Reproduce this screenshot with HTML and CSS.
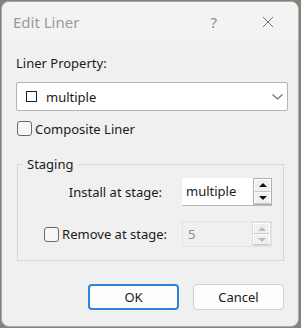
FILE: index.html
```html
<!DOCTYPE html>
<html lang="en">
<head>
    <meta charset="UTF-8">
    <title>Edit Liner</title>
    <link rel="stylesheet" href="styles.css">
</head>
<body>

    <div class="window">
        <div class="titlebar">
            <span class="title">Edit Liner</span>
            <span class="help">?</span>
            <svg class="close" width="12" height="12" viewBox="0 0 12 12">
                <path d="M1 1 L11 11 M11 1 L1 11" stroke="#7a7a7a" stroke-width="1" fill="none"/>
            </svg>
        </div>

        <div class="client">
            <div class="label">Liner Property:</div>

            <div class="combo">
                <span class="swatch"></span>
                <span class="combo-text">multiple</span>
                <svg class="chevron" width="11" height="6" viewBox="0 0 11 6">
                    <path d="M0.5 0.5 L5.5 5 L10.5 0.5" stroke="#6d6d6d" stroke-width="1.1" fill="none"/>
                </svg>
            </div>

            <label class="check-row">
                <span class="checkbox"></span>
                <span>Composite Liner</span>
            </label>

            <fieldset class="group">
                <legend>Staging</legend>
                <div class="stage-grid">
                    <div class="stage-label">Install at stage:</div>
                    <div class="spin">
                        <span class="spin-value">multiple</span>
                        <span class="spin-buttons">
                            <span class="spin-btn"><span class="tri-up"></span></span>
                            <span class="spin-btn"><span class="tri-down"></span></span>
                        </span>
                    </div>

                    <label class="stage-label check-label">
                        <span class="checkbox"></span>
                        <span>Remove at stage:</span>
                    </label>
                    <div class="spin disabled">
                        <span class="spin-value">5</span>
                        <span class="spin-buttons">
                            <span class="spin-btn"><span class="tri-up"></span></span>
                            <span class="spin-btn"><span class="tri-down"></span></span>
                        </span>
                    </div>
                </div>
            </fieldset>

            <div class="buttons">
                <button class="btn default">OK</button>
                <button class="btn">Cancel</button>
            </div>
        </div>
    </div>

</body>
</html>
```

FILE: styles.css
```css
body {
    margin: 0;
    background-color: #7c8778;
    font-family: "Noto Sans", "Open Sans", sans-serif;
    font-size: 13px;
    color: #1a1a1a;
}
.window {
    margin: 1px 0 0 1px;
    width: 296px;
    height: 324px;
    background-color: #f0f0f0;
    border: 1px solid #a9a9a9;
    border-radius: 8px;
    overflow: hidden;
}
.titlebar {
    height: 39px;
    background-color: #f3f3f3;
    display: flex;
    align-items: center;
    padding-left: 11px;
}
.title {
    font-size: 15px;
    color: #9a9a9a;
    flex: 1;
}
.help {
    font-size: 15px;
    color: #8a8a8a;
    margin-right: 45px;
}
.close {
    margin-right: 24px;
}
.client {
    padding: 14px 0 0 14px;
}
.label {
    height: 16px;
    line-height: 16px;
}
.combo {
    margin-top: 11px;
    width: 270px;
    height: 27px;
    background-color: #fff;
    border: 1px solid #b4b4b4;
    border-radius: 2px;
    display: flex;
    align-items: center;
}
.swatch {
    width: 9px;
    height: 9px;
    border: 1px solid #1f1f1f;
    margin-left: 9px;
    margin-right: 9px;
}
.combo-text {
    flex: 1;
}
.chevron {
    margin-right: 4px;
}
.check-row {
    margin-top: 10px;
    margin-left: 1px;
    display: flex;
    align-items: center;
    height: 15px;
}
.checkbox {
    width: 13px;
    height: 13px;
    border: 1px solid #6a6a6a;
    border-radius: 3px;
    background-color: #f7f7f7;
    margin-right: 3px;
}
.group {
    margin: 20px 0 0 1px;
    width: 267px;
    box-sizing: border-box;
    padding: 0;
    border: 1px solid #d6d6d6;
    height: 105px;
}
.group legend {
    margin-left: 5px;
    padding: 0 4px;
    line-height: 16px;
}
.stage-grid {
    display: grid;
    grid-template-columns: 144px 90px;
    column-gap: 20px;
    row-gap: 15px;
    align-items: center;
    margin-top: 6px;
}
.stage-label {
    text-align: right;
}
.check-label {
    display: flex;
    align-items: center;
    justify-content: flex-end;
    margin-right: -5px;
}
.spin {
    height: 28px;
    display: flex;
    background-color: #fff;
    border-bottom: 1px solid #b8b8b8;
    box-sizing: border-box;
}
.spin-value {
    flex: 1;
    padding-left: 4px;
    line-height: 26px;
}
.spin-buttons {
    width: 19px;
    display: flex;
    flex-direction: column;
    background-color: #f0f0f0;
    border: 1px solid #b0b0b0;
    box-sizing: border-box;
}
.spin-btn {
    flex: 1;
    display: flex;
    align-items: center;
    justify-content: center;
    border: 1px solid #fff;
    border-bottom-color: #c8c8c8;
}
.tri-up {
    border-left: 4px solid transparent;
    border-right: 4px solid transparent;
    border-bottom: 4px solid #111;
}
.tri-down {
    border-left: 4px solid transparent;
    border-right: 4px solid transparent;
    border-top: 4px solid #111;
}
.spin.disabled {
    height: 26px;
    background-color: #f0f0f0;
    border: 1px solid #e3e3e3;
    color: #8c8c8c;
}
.spin.disabled .spin-value {
    padding-left: 5px;
    line-height: 24px;
}
.spin.disabled .spin-buttons {
    border-color: #dcdcdc;
}
.spin.disabled .tri-up {
    border-bottom-color: #bcbcbc;
}
.spin.disabled .tri-down {
    border-top-color: #bcbcbc;
}
.buttons {
    margin-top: 23px;
    padding-right: 14px;
    display: flex;
    justify-content: flex-end;
    gap: 14px;
}
.btn {
    width: 91px;
    height: 26px;
    font-family: inherit;
    font-size: 13px;
    color: #1a1a1a;
    background-color: #fdfdfd;
    border: 1px solid #cfcfcf;
    border-radius: 4px;
}
.btn.default {
    border: 2px solid #2f82d6;
}
```
